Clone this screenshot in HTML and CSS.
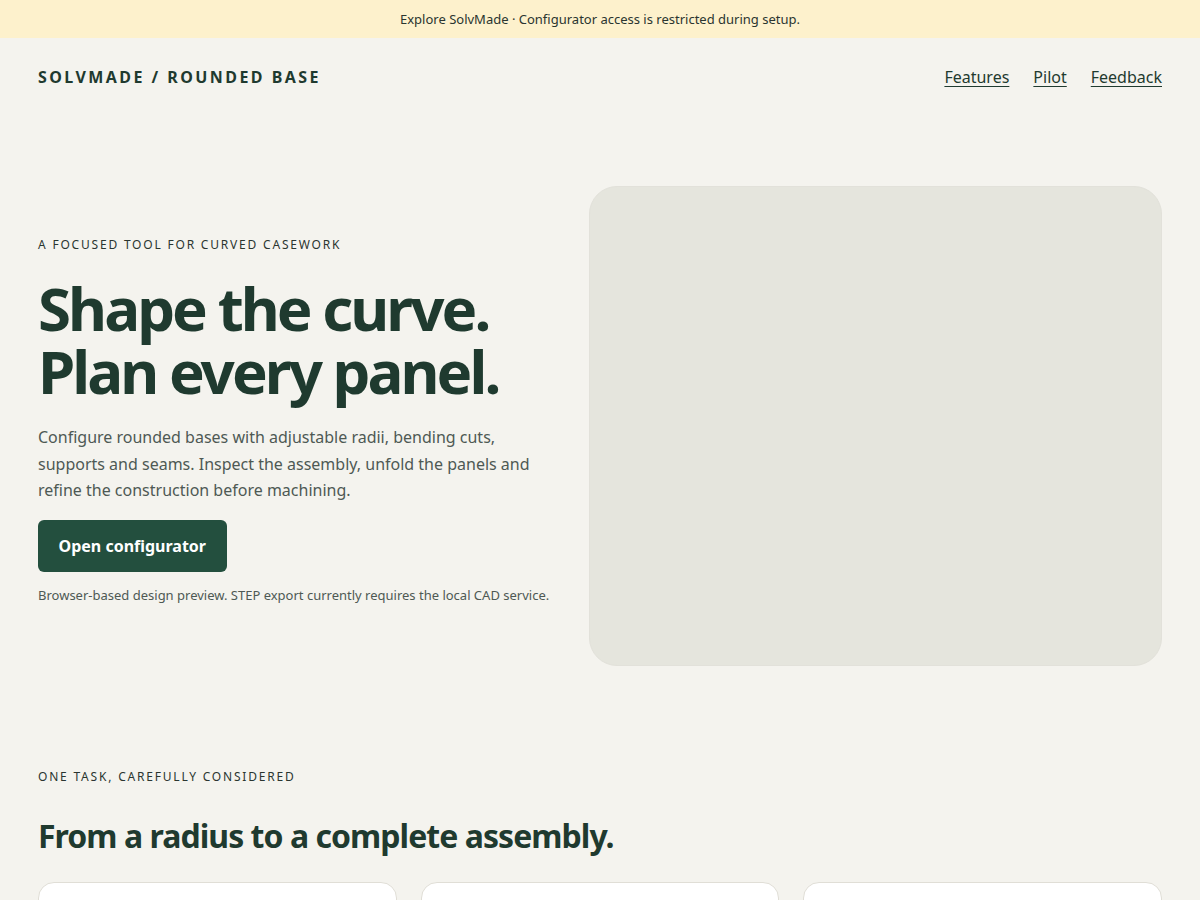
FILE: index.html
```html
<!DOCTYPE html>
<html lang="en">
<head>
<meta charset="utf-8">
<title>SolvMade / Rounded Base</title>
<link rel="stylesheet" href="styles.css">
</head>
<body>
<div class="banner">Explore SolvMade · Configurator access is restricted during setup.</div>
<header class="site-header">
  <div class="brand">SOLVMADE / ROUNDED BASE</div>
  <nav class="nav">
    <a href="#features">Features</a>
    <a href="#pilot">Pilot</a>
    <a href="#feedback">Feedback</a>
  </nav>
</header>
<main>
  <section class="hero">
    <div class="hero-copy">
      <p class="eyebrow">A FOCUSED TOOL FOR CURVED CASEWORK</p>
      <h1 class="hero-title">Shape the curve.<br>Plan every panel.</h1>
      <p class="lead">Configure rounded bases with adjustable radii, bending cuts, supports and seams. Inspect the assembly, unfold the panels and refine the construction before machining.</p>
      <a class="btn" href="#">Open configurator</a>
      <p class="note">Browser-based design preview. STEP export currently requires the local CAD service.</p>
    </div>
    <div class="hero-visual"></div>
  </section>
  <section class="features" id="features">
    <p class="eyebrow">ONE TASK, CAREFULLY CONSIDERED</p>
    <h2 class="section-title">From a radius to a complete assembly.</h2>
    <div class="cards">
      <div class="card"></div>
      <div class="card"></div>
      <div class="card"></div>
    </div>
  </section>
</main>
</body>
</html>
```
FILE: styles.css
```css
* { box-sizing: border-box; }
html, body { margin: 0; padding: 0; }
body {
  background: #f4f3ee;
  color: #1f3a2f;
  font-family: "Noto Sans", "Open Sans", sans-serif;
}
.banner {
  height: 38px;
  background: #fdf1cc;
  color: #2a3530;
  font-size: 13px;
  display: flex;
  align-items: center;
  justify-content: center;
}
.site-header {
  display: flex;
  align-items: center;
  justify-content: space-between;
  padding: 0 38px;
  height: 78px;
}
.brand {
  font-size: 16px;
  font-weight: 700;
  letter-spacing: 2.45px;
  color: #1f3a2f;
}
.nav { display: flex; gap: 24px; }
.nav a {
  color: #1f3a2f;
  font-size: 16px;
  text-decoration: underline;
  text-underline-offset: 3px;
  text-decoration-thickness: 1px;
}
.hero {
  display: grid;
  grid-template-columns: 1fr 573px;
  gap: 38px;
  padding: 70px 38px 0;
  align-items: center;
}
.hero-copy { padding-bottom: 12px; }
.eyebrow {
  margin: 0;
  font-size: 12px;
  letter-spacing: 1.8px;
  color: #2a3530;
}
.hero-title {
  margin: 24px 0 0;
  font-size: 60px;
  line-height: 63px;
  font-weight: 700;
  letter-spacing: -2.95px;
  color: #1f3a2f;
}
.lead {
  margin: 21px 0 0;
  font-size: 16px;
  line-height: 26.4px;
  color: #4e5954;
  max-width: 500px;
}
.btn {
  display: inline-flex;
  align-items: center;
  margin-top: 16px;
  height: 52px;
  padding: 0 20.5px;
  background: #234f3e;
  color: #fff;
  font-weight: 700;
  font-size: 16px;
  border-radius: 6px;
  text-decoration: none;
}
.note {
  margin: 14px 0 0;
  font-size: 13px;
  color: #4e5954;
  white-space: nowrap;
}
.hero-visual {
  height: 480px;
  background: #e5e5dd;
  border: 1px solid #e2e1da;
  border-radius: 28px;
}
.features {
  padding: 102px 38px 0;
}
.section-title {
  margin: 29px 0 0;
  font-size: 32px;
  font-weight: 700;
  letter-spacing: -0.96px;
  color: #1f3a2f;
}
.cards {
  display: grid;
  grid-template-columns: repeat(3, 1fr);
  gap: 24px;
  margin-top: 25px;
}
.card {
  height: 200px;
  background: #fff;
  border: 1px solid #e0ded6;
  border-radius: 16px;
}
```
